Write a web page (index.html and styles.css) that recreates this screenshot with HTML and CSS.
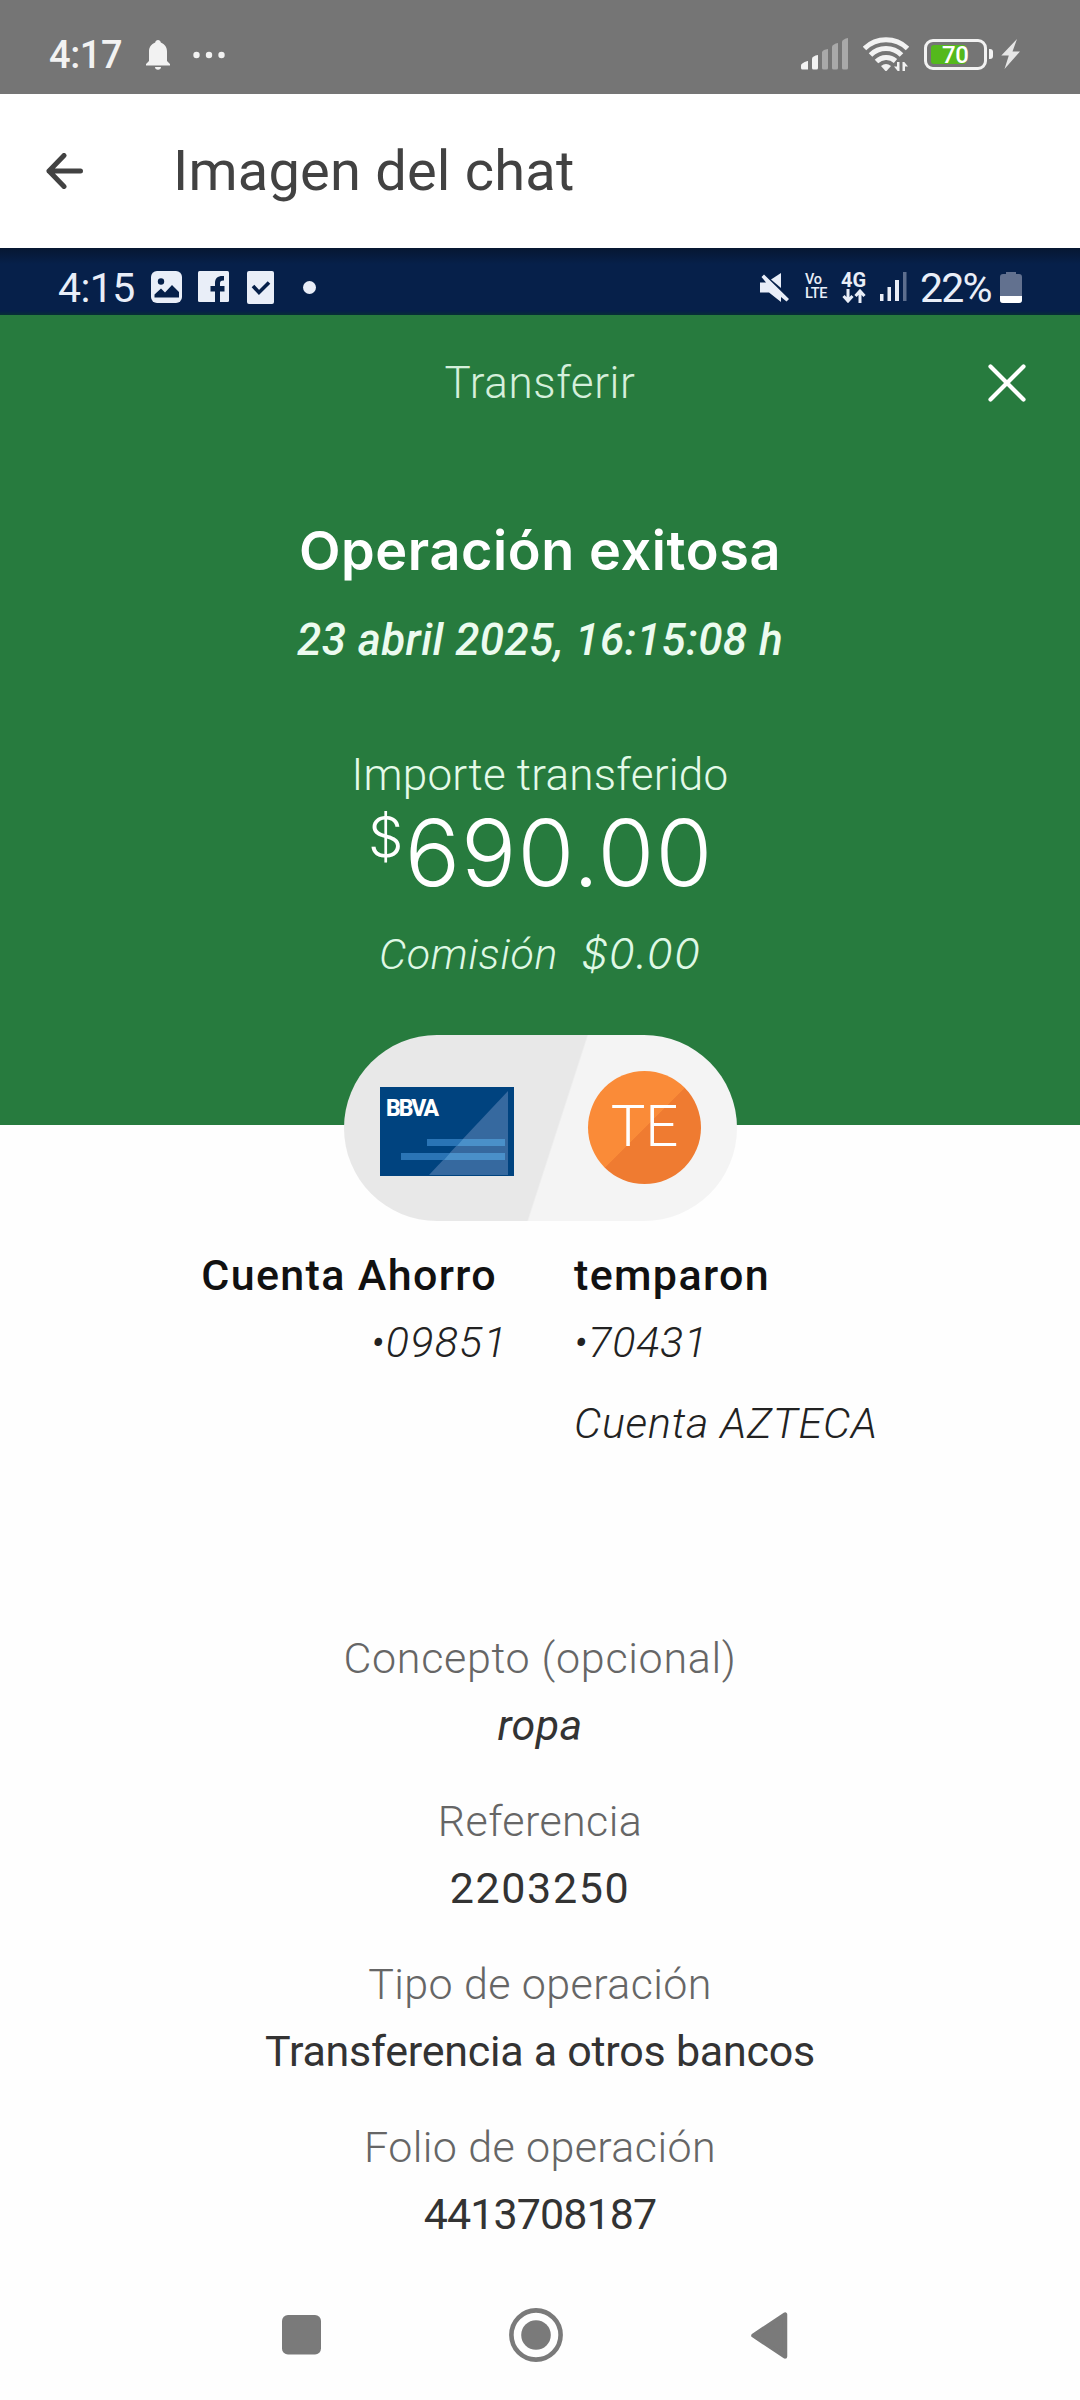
FILE: index.html
```
<!DOCTYPE html>
<html lang="es">
<head>
<meta charset="utf-8">
<title>Imagen del chat</title>
<link rel="stylesheet" href="styles.css">
</head>
<body>
<div class="phone">
  <header class="status">
    <div class="status-left">
      <span class="clock">4:17</span>
      <svg class="bell" width="24" height="30" viewBox="0 0 24 30" fill="#f2f2f2"><path d="M12 0c1.500 0 2.600 1 2.800 2.500C18.800 4 21 7.300 21 11.500V21l3 3v1.500H0V24l3-3v-9.500C3 7.300 5.200 4 9.200 2.500 9.400 1 10.500 0 12 0ZM9 27h6c0 1.700-1.300 2.700-3 2.700S9 28.700 9 27Z"/></svg>
      <svg class="more" width="32" height="8" viewBox="0 0 32 8" fill="#f2f2f2"><circle cx="3.500" cy="4" r="3.200"/><circle cx="16" cy="4" r="3.200"/><circle cx="28.500" cy="4" r="3.200"/></svg>
    </div>
    <div class="status-right">
      <svg width="48" height="32" viewBox="0 0 48 32" fill="#f2f2f2"><path d="M0 31v-3.500Q0 25 6.500 23H7v8.500H1.500Q0 31.500 0 30Z"/><path d="M11 30V20.500Q11.500 18 17 17v13q0 1.500-1.500 1.500h-3Q11 31.500 11 30Z"/><g fill="#a9a9a9"><path d="M21 30V14q1-2.500 6-3v19q0 1.500-1.500 1.500h-3Q21 31.500 21 30Z"/><path d="M31 30V8.500q1-2.500 6-3.500v25q0 1.500-1.500 1.500h-3Q31 31.500 31 30Z"/><path d="M41 30V3.500q1-2.500 6-3.500v30q0 1.500-1.500 1.500h-3Q41 31.500 41 30Z"/></g></svg>
      <svg class="wifi" width="46" height="36" viewBox="0 0 46 36"><g fill="none" stroke="#f2f2f2" stroke-width="5"><path d="M1.500 12.500a31 31 0 0 1 43 0"/><path d="M7.500 19a22 22 0 0 1 31 0"/><path d="M13.500 25.500a14 14 0 0 1 19-.5"/></g><path d="M18 30q5-4 10 0l-4 4.500q-1 1-2 0Z" fill="#f2f2f2"/><path d="M36.500 26v9h-1.800L31 30.500h3V26ZM39.500 35v-9h1.800L45 30.500h-3V35Z" fill="#f2f2f2"/></svg>
      <span class="battery"><span class="battery-level"></span><span class="battery-text">70</span></span>
      <span class="battery-tip"></span>
      <svg class="bolt" width="19" height="30" viewBox="0 0 19 30" fill="#e6e6e6"><path d="M16 0 .3 16.500h7.500L3.500 30 19 12.500h-7.500Z"/></svg>
    </div>
  </header>

  <div class="appbar">
    <svg class="back" width="38" height="36" viewBox="0 0 38 36" fill="none" stroke="#424242" stroke-width="5" stroke-linecap="round" stroke-linejoin="round"><path d="M18 2.500 3 18l15 15.500M3 18h31.500"/></svg>
    <h1 class="appbar-title">Imagen del chat</h1>
  </div>

  <main class="shot">
    <div class="inner-status">
      <span class="inner-clock">4:15</span>
      <svg class="i-photo" width="31" height="32" viewBox="0 0 31 32"><rect width="31" height="32" rx="6" fill="#e9eef8"/><circle cx="10" cy="10.500" r="3.200" fill="#06204a"/><path d="M3.500 26.500v-3l6.500-6 4 4L21 14l7 7v5.500Z" fill="#06204a"/></svg>
      <svg class="i-fb" width="31" height="32" viewBox="0 0 31 32"><rect width="31" height="31" rx="1.500" fill="#e9eef8"/><path d="M17 31V20.500h-4.500V15H17v-3c0-5 3-7.500 9-7V9.500c-3-.2-4 .8-4 3V15h4.500v5.500H22V31Z" fill="#06204a"/></svg>
      <svg class="i-check" width="27" height="33" viewBox="0 0 27 33"><rect width="27" height="33" rx="2" fill="#e9eef8"/><path d="m6 15 6 6.500 10-10" fill="none" stroke="#06204a" stroke-width="3.600"/></svg>
      <span class="inner-dot"></span>
      <svg class="i-mute" width="31" height="31" viewBox="0 0 31 31" fill="#e9eef8"><path d="M22 1v15L12 7.500Z"/><path d="M1 10.500h6L2.500 5 5 2.500 30 27l-2.500 2.500L22 25v5L10 20.500H1Z"/></svg>
      <span class="volte"><span>Vo</span><span>LTE</span></span>
      <span class="net"><span class="net-4g">4G</span><svg width="24" height="14" viewBox="0 0 24 14" fill="none" stroke="#e9eef8" stroke-width="3"><path d="M6 0v12M1.500 7 6 12l4.500-5M18 14V2M13.500 7 18 2l4.500 5"/></svg></span>
      <svg class="i-sig" width="27" height="30" viewBox="0 0 27 30" fill="#e9eef8"><rect y="22" width="3.500" height="7"/><rect x="7.500" y="15" width="3.500" height="14"/><rect x="15" y="8" width="4" height="21"/><rect x="23" width="3.500" height="29" fill="#5d6e8e"/></svg>
      <span class="inner-pct">22%</span>
      <svg class="i-batt" width="22" height="31" viewBox="0 0 22 31"><path d="M6 0h10v2h3q3 0 3 3v23q0 3-3 3H3q-3 0-3-3V5q0-3 3-3h3Z" fill="#62718f"/><path d="M0 24h22v4q0 3-3 3H3q-3 0-3-3Z" fill="#fff"/></svg>
    </div>

    <section class="hero">
      <div class="hero-bar">
        <span class="hero-title">Transferir</span>
        <svg class="close" width="38" height="38" viewBox="0 0 38 38" stroke="#fff" stroke-width="4.200" stroke-linecap="round"><path d="m2.500 2.500 33 33m0-33-33 33"/></svg>
      </div>
      <h2 class="result">Operación exitosa</h2>
      <p class="date">23 abril 2025, 16:15:08 h</p>
      <p class="amount-label">Importe transferido</p>
      <p class="amount"><span class="currency">$</span><span>690.00</span></p>
      <p class="fee"><span class="fee-label">Comisión</span><span class="fee-value">$0.00</span></p>
    </section>

    <div class="pill">
      <div class="bank-card">
        <span class="bank-name">BBVA</span>
        <svg width="134" height="89" viewBox="0 0 134 89"><path d="M128 4v84H49Z" fill="#36699f"/><path d="M47 52h78v7H47ZM21 66h104v7H21Z" fill="#2a74b5"/><path d="M83 52h42v7H77ZM70 66h55v7H64Z" fill="#4a90c9"/></svg>
      </div>
      <div class="avatar">TE</div>
    </div>

    <section class="accounts">
      <div class="from">
        <strong class="name from-name">Cuenta Ahorro</strong>
        <span class="number from-number">•09851</span>
      </div>
      <div class="to">
        <strong class="name">temparon</strong>
        <span class="number">•70431</span>
        <span class="bank">Cuenta AZTECA</span>
      </div>
    </section>

    <dl class="details">
      <dt class="d-concept">Concepto (opcional)</dt>
      <dd class="d-italic">ropa</dd>
      <dt>Referencia</dt>
      <dd class="d-ref">2203250</dd>
      <dt>Tipo de operación</dt>
      <dd>Transferencia a otros bancos</dd>
      <dt>Folio de operación</dt>
      <dd class="d-folio">4413708187</dd>
    </dl>
  </main>

  <nav class="navbar">
    <svg width="39" height="40" viewBox="0 0 39 40"><rect width="39" height="39.500" rx="6" fill="#7a7a7a"/></svg>
    <svg class="home" width="54" height="54" viewBox="0 0 54 54"><circle cx="27" cy="27" r="24.600" fill="none" stroke="#7a7a7a" stroke-width="4.600"/><circle cx="27" cy="27" r="14.800" fill="#7a7a7a"/></svg>
    <svg class="prev" width="37" height="47" viewBox="0 0 37 47"><path d="M34 2.500v42L2.500 23.500Z" fill="#7a7a7a" stroke="#7a7a7a" stroke-width="4.500" stroke-linejoin="round"/></svg>
  </nav>
</div>
</body>
</html>
```
FILE: styles.css
```
* { box-sizing: border-box; }
body, h1, h2, p, dl, dd { margin: 0; }
body { background: #fefefe; font-family: Roboto, sans-serif; }
svg { display: block; flex: none; }

.phone { display: flex; flex-direction: column; width: 1080px; height: 2400px; overflow: hidden; }

/* system status bar */
.status { display: flex; justify-content: space-between; height: 94px; padding: 0 60px 0 49px; background: #757575; color: #f2f2f2; }
.status-left, .status-right { display: flex; align-items: center; }
.status-left { padding-top: 15px; }
.status-right { padding-top: 14px; }
.clock { font-size: 38px; font-weight: 500; letter-spacing: -.4px; }
.bell { margin-left: 24px; }
.more { margin-left: 23px; }
.wifi { margin-left: 14px; }
.battery { position: relative; display: flex; align-items: center; width: 63px; height: 31px; margin-left: 15px; border: 3px solid #f2f2f2; border-radius: 9px; }
.battery-level { width: 35px; height: 19px; margin-left: 4px; border-radius: 3px; background: #54b91c; }
.battery-text { position: absolute; top: -1px; left: 15px; font-size: 24px; font-weight: 500; line-height: 28px; letter-spacing: -.5px; color: #fff; }
.battery-tip { width: 4px; height: 10px; margin-left: 2px; border-radius: 0 3px 3px 0; background: #f2f2f2; }
.bolt { margin-left: 8px; }

.appbar { display: flex; align-items: center; height: 154px; padding: 0 0 1px 46px; background: #fff; }
.appbar-title { margin-left: 89px; font-size: 56px; font-weight: 400; line-height: 70px; letter-spacing: .2px; color: #424242; }

/* shared image */
.shot { display: flex; flex-direction: column; height: 2035px; }

.inner-status { display: flex; align-items: center; height: 67px; padding: 14px 58px 3px; background: linear-gradient(#061732, #06204a 16px, #06204a 63px, #063035); color: #e9eef8; }
.inner-clock, .inner-pct { padding-top: 2px; font-size: 41px; line-height: 46px; }
.inner-clock { width: 93px; letter-spacing: -.6px; }
.i-fb { margin-left: 16px; }
.i-check { margin-left: 18px; }
.inner-dot { width: 13px; height: 13px; margin-left: 29px; border-radius: 50%; background: #e9eef8; }
.i-mute { margin-left: auto; }
.volte { display: flex; flex-direction: column; width: 36px; margin-left: 15px; font-size: 14.500px; font-weight: 500; line-height: 14.500px; letter-spacing: -.3px; }
.net { display: flex; flex-direction: column; align-items: center; width: 25px; }
.net-4g { font-size: 20px; font-weight: 700; line-height: 18px; }
.i-sig { margin-left: 14px; }
.inner-pct { width: 80px; margin-left: 13px; letter-spacing: -1.800px; }

.hero { display: flex; flex-direction: column; align-items: center; height: 810px; padding-top: 38px; background: #277b3e; color: #fff; text-align: center; }
.hero-bar { display: grid; grid-template-columns: 1fr auto 1fr; align-items: center; width: 100%; height: 60px; padding-right: 54px; padding-left: 54px; }
.hero-title { grid-column: 2; font-size: 44px; font-weight: 300; line-height: 60px; letter-spacing: .6px; color: #d5efdb; }
.close { justify-self: end; }
.result { margin-top: 103px; font-family: Inter, sans-serif; font-size: 54px; font-weight: 600; line-height: 70px; letter-spacing: .6px; }
.date { margin-top: 24px; font-size: 44px; font-style: italic; font-weight: 500; line-height: 60px; letter-spacing: .47px; color: #ecfbef; }
.amount-label { margin-top: 75px; font-size: 44px; font-weight: 300; line-height: 60px; letter-spacing: .25px; color: #e4fae9; }
.amount { display: flex; height: 100px; margin-top: -2px; font-family: Inter, sans-serif; font-size: 92px; font-weight: 300; line-height: 100px; letter-spacing: 1px; }
.currency { width: 38px; font-size: 56px; line-height: 68px; letter-spacing: 0; }
.fee { display: flex; gap: 23px; margin-top: 21px; font-size: 43px; font-style: italic; font-weight: 300; line-height: 60px; color: #dff8e5; }
.fee-label { letter-spacing: .7px; }
.fee-value { font-family: Inter, sans-serif; font-size: 42px; letter-spacing: 1.200px; }

.pill { z-index: 1; display: flex; flex: none; align-items: center; justify-content: space-between; width: 393px; height: 186px; margin: -90px 0 0 344px; padding: 0 36px; border-radius: 93px; background: linear-gradient(107.900deg, #e8e8e8 53.600%, #f4f4f4 54%); }
.bank-card { position: relative; width: 134px; height: 89px; margin-top: 7px; background: #00437f; }
.bank-name { position: absolute; top: 9px; left: 6px; font-size: 23px; font-weight: 800; line-height: 26px; letter-spacing: -2px; color: #fff; }
.avatar { width: 113px; height: 113px; margin-bottom: 1px; border-radius: 50%; background: linear-gradient(135deg, #fa8b38 50%, #ef7b31 50.500%); font-size: 58px; font-weight: 300; line-height: 110px; text-align: center; color: #fff; }

.accounts { display: grid; grid-template-columns: 504px auto; column-gap: 70px; height: 406px; padding-top: 23.500px; font-size: 43px; line-height: 60px; color: #222; }
.from, .to { display: flex; flex-direction: column; }
.from { align-items: flex-end; }
.name { font-weight: 500; letter-spacing: 1.350px; color: #111; }
.from-name { margin-right: 7px; }
.number, .bank { font-style: italic; font-weight: 300; letter-spacing: .8px; }
.number { margin-top: 7px; }
.from-number { margin-right: -4px; letter-spacing: 1.300px; }
.bank { margin-top: 21px; }

.details { font-size: 43px; text-align: center; }
dt { margin-top: 35.500px; font-weight: 300; line-height: 60px; letter-spacing: .4px; color: #666; }
dt:first-child { margin-top: 1px; }
dd { margin-top: 7.400px; font-weight: 400; line-height: 60px; letter-spacing: -.25px; color: #333; }
.d-concept { letter-spacing: .7px; }
.d-italic { font-style: italic; letter-spacing: .3px; }
.d-ref { letter-spacing: 1.600px; }
.d-folio { letter-spacing: -.9px; }

/* navigation buttons */
.navbar { display: flex; align-items: center; height: 117px; padding: 0 0 13px 282px; }
.home { margin-left: 188px; }
.prev { margin-left: 188px; }
```
